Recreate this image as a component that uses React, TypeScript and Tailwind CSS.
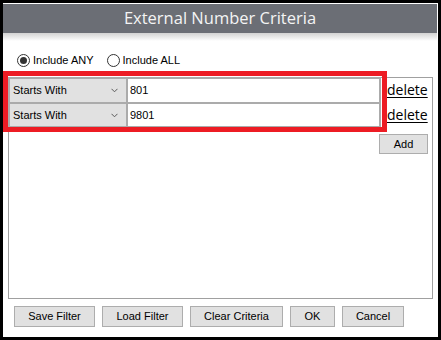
import React from "react";

const Chevron = () => (
  <svg width="7" height="5" viewBox="0 0 7 5" className="shrink-0">
    <path d="M0.5 0.8 L3.5 3.8 L6.5 0.8" fill="none" stroke="#5a5a5a" strokeWidth="1" />
  </svg>
);

const Radio = ({ checked }: { checked?: boolean }) => (
  <span className="flex h-[13px] w-[13px] items-center justify-center rounded-full border border-[#333333] bg-white">
    {checked && <span className="h-[7px] w-[7px] rounded-full bg-[#333333]" />}
  </span>
);

const Btn = ({ label, w }: { label: string; w: string }) => (
  <button
    className={`flex h-[21px] items-center justify-center border border-[#adadad] bg-[#e1e1e1] text-[11px] text-black ${w}`}
  >
    {label}
  </button>
);

export default function App() {
  const rows = ["801", "9801"];
  return (
    <div
      className="relative h-[340px] w-[441px] bg-black p-[3px]"
      style={{ fontFamily: '"Liberation Sans", Arial, sans-serif' }}
    >
      <div className="flex h-[334px] w-[435px] flex-col bg-white pt-px pr-px">
        <div
          className="flex h-[29px] items-center justify-center bg-[#6b6e75] text-[16.5px] text-[#f4f4f4]"
          style={{ fontFamily: '"Open Sans", sans-serif' }}
        >
          External Number Criteria
        </div>
        <div className="h-[8px] bg-gradient-to-b from-[#d2d2d2] to-white" />
        <div className="mt-[11px] flex h-[16px] items-center pl-[14px] text-[11px] text-black">
          <Radio checked />
          <span className="ml-[3px]">Include ANY</span>
          <span className="ml-[13px]">
            <Radio />
          </span>
          <span className="ml-[3px]">Include ALL</span>
        </div>
        <div className="ml-[5px] mt-[9px] flex h-[222px] w-[425px] flex-col border border-[#a0a0a0]">
          <div className="-ml-px -mt-px flex flex-col">
            {rows.map((v, i) => (
              <div key={v} className="flex items-center">
                <div
                  className={`flex w-[120px] items-center justify-between border-x-2 border-b-2 border-[#ababab] bg-[#e1e1e1] pl-[3px] pr-[8px] text-[11px] text-black ${
                    i === 0 ? "h-[27px] border-t-2" : "h-[24px]"
                  }`}
                >
                  <span>Starts With</span>
                  <Chevron />
                </div>
                <div
                  className={`flex w-[253px] items-center border-r-2 border-b-2 border-[#ababab] bg-white pl-[2px] text-[11px] text-black ${
                    i === 0 ? "h-[27px] border-t-2" : "h-[24px]"
                  }`}
                >
                  {v}
                </div>
                <span
                  className="ml-[6px] -mt-[2px] text-[14px] leading-none text-black underline underline-offset-[2px]"
                  style={{ fontFamily: '"Open Sans", sans-serif' }}
                >
                  delete
                </span>
              </div>
            ))}
          </div>
          <div className="mt-[6px] flex justify-end pr-[4px]">
            <button className="flex h-[20px] w-[49px] items-center justify-center border border-[#adadad] bg-[#e1e1e1] text-[11px] text-black">
              Add
            </button>
          </div>
        </div>
        <div className="ml-[11px] mt-[7px] flex gap-[7px]">
          <Btn label="Save Filter" w="w-[81px]" />
          <Btn label="Load Filter" w="w-[81px]" />
          <Btn label="Clear Criteria" w="w-[93px]" />
          <Btn label="OK" w="w-[45px]" />
          <Btn label="Cancel" w="w-[62px]" />
        </div>
      </div>
      <div className="pointer-events-none absolute left-[3px] top-[71px] h-[61px] w-[384px] border-[5px] border-[#ed1c24]" />
    </div>
  );
}
